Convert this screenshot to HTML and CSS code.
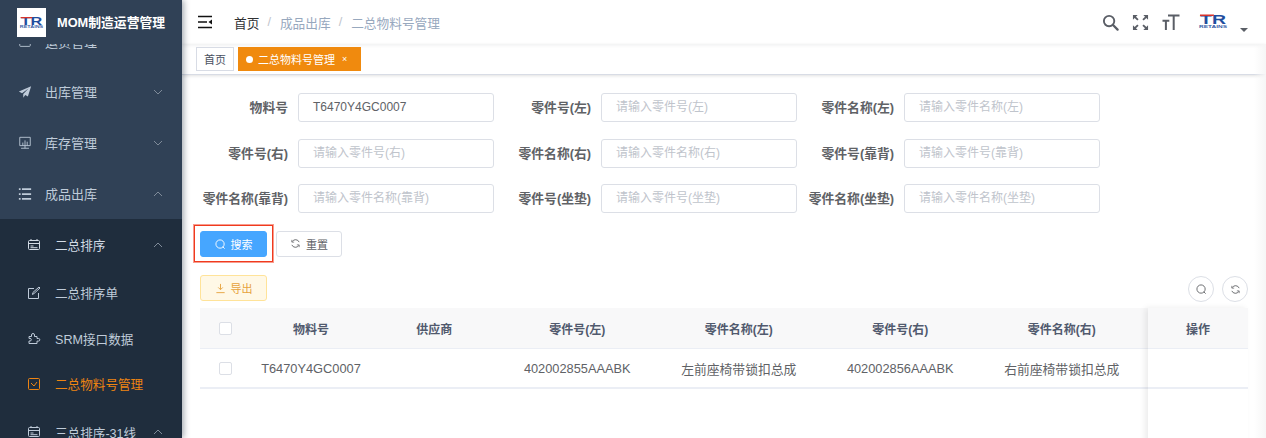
FILE: index.html
```html
<!DOCTYPE html>
<html lang="zh-CN">
<head>
<meta charset="utf-8">
<title>二总物料号管理</title>
<link rel="stylesheet" href="styles.css">
</head>
<body>
<div class="app">
  <aside class="sidebar">
    <div class="brand">
      <div class="brand-logo">
        <svg class="tr tr-small" viewBox="0 -3 30 18">
          <text class="tr-mark" x="2" y="10" textLength="26" lengthAdjust="spacingAndGlyphs">TR</text>
          <path d="M2 .600h14l-.4 1.500H2z" fill="#d8322a"/>
          <text class="tr-name" x="1" y="14.200" textLength="28" lengthAdjust="spacingAndGlyphs">RETAINS</text>
        </svg>
      </div>
      <span class="brand-title">MOM制造运营管理</span>
    </div>
    <nav class="menu">
      <div class="clip-item"><span class="clip-inner">
        <svg class="mi" viewBox="0 0 16 16"><rect x="2" y="3" width="12" height="10" rx="1" fill="none" stroke="currentColor"/></svg>
        <span>运货管理</span></span></div>
      <div class="item">
        <svg class="mi" viewBox="0 0 16 16"><path d="M15 1.500 1 7.500l3.600 1.900L12 4 6 10.200V14.500l2.300-3 3 1.600z" fill="currentColor"/></svg>
        <span class="label">出库管理</span>
        <svg class="chev" viewBox="0 0 10 6"><path d="M1 1l4 4 4-4"/></svg>
      </div>
      <div class="item">
        <svg class="mi" viewBox="0 0 16 16"><path d="M2 1.500h12v9.500H2zM3.500 14h9M8 11v3M8 5v6M5.500 7.500V11M10.500 6.500V11" fill="none" stroke="currentColor"/></svg>
        <span class="label">库存管理</span>
        <svg class="chev" viewBox="0 0 10 6"><path d="M1 1l4 4 4-4"/></svg>
      </div>
      <div class="item">
        <svg class="mi" viewBox="0 0 16 16"><path d="M4.500 1.500H15v2H4.500zM4.500 7H15v2H4.500zM4.500 12.500H15v2H4.500zM1 1.500h2v2H1zM1 7h2v2H1zM1 12.500h2v2H1z" fill="currentColor"/></svg>
        <span class="label">成品出库</span>
        <svg class="chev" viewBox="0 0 10 6"><path d="M1 5l4-4 4 4"/></svg>
      </div>
      <div class="submenu">
        <div class="sub sub-tall sub-head">
          <svg class="si" viewBox="0 0 14 14"><rect x="1.500" y="2.500" width="11" height="9" rx="1" fill="none" stroke="currentColor"/><path d="M1.500 5.500h11M3.500 8h3M3.500 9.700h7" stroke="currentColor" fill="none"/><path d="M4 1v2M10 1v2" stroke="currentColor"/></svg>
          <span class="label">二总排序</span>
          <svg class="chev" viewBox="0 0 10 6"><path d="M1 5l4-4 4 4"/></svg>
        </div>
        <div class="sub">
          <svg class="si" viewBox="0 0 14 14"><path d="M7 2.500H1.500v10h10V7M5.500 8.500l.4-2L12 1l1 1-6 5.500z" fill="none" stroke="currentColor"/></svg>
          <span class="label">二总排序单</span>
        </div>
        <div class="sub">
          <svg class="si" viewBox="0 0 14 14"><path d="M2 5.500h2.500V4a1.500 1.500 0 0 1 3 0v1.500H10v2h1.500a1.300 1.300 0 0 1 0 2.600H10v2.400H2v-2.500h1a1.300 1.300 0 0 0 0-2.600H2z" fill="none" stroke="currentColor"/></svg>
          <span class="label">SRM接口数据</span>
        </div>
        <div class="sub active">
          <svg class="si" viewBox="0 0 14 14"><rect x="1.500" y="1.500" width="11" height="11" rx="1" fill="none" stroke="currentColor"/><path d="M4 6l3 3 3-4" fill="none" stroke="currentColor"/></svg>
          <span class="label">二总物料号管理</span>
        </div>
        <div class="sub sub-tall">
          <svg class="si" viewBox="0 0 14 14"><rect x="1.500" y="2.500" width="11" height="9" rx="1" fill="none" stroke="currentColor"/><path d="M1.500 5.500h11M3.500 8h3M3.500 9.700h7" stroke="currentColor" fill="none"/><path d="M4 1v2M10 1v2" stroke="currentColor"/></svg>
          <span class="label">三总排序-31线</span>
          <svg class="chev" viewBox="0 0 10 6"><path d="M1 5l4-4 4 4"/></svg>
        </div>
      </div>
    </nav>
  </aside>

  <main class="main">
    <header class="topbar">
      <svg class="hamburger" viewBox="0 0 16 14"><path d="M1 1.500h14M1 7h9M1 12.500h14" stroke="#111" stroke-width="1.600" fill="none"/><path d="M15 4.500v5l-3.500-2.500z" fill="#111"/></svg>
      <div class="crumbs">
        <span class="crumb-home">首页</span><span class="sep">/</span><span>成品出库</span><span class="sep">/</span><span>二总物料号管理</span>
      </div>
      <div class="tools">
        <svg class="tool tool-search" viewBox="0 0 18 18"><circle cx="7.500" cy="7.500" r="5.500" fill="none" stroke="#5a5e66" stroke-width="2"/><path d="M11.700 11.700 16.500 16.500" stroke="#5a5e66" stroke-width="2.400" stroke-linecap="round"/></svg>
        <svg class="tool tool-full" viewBox="0 0 18 18"><path d="M1 1h5l-1.800 1.800 2.800 2.800-1.400 1.400-2.800-2.800L1 6zM17 1v5l-1.800-1.800-2.800 2.800-1.400-1.400 2.800-2.800L12 1zM1 17v-5l1.800 1.800 2.800-2.800 1.400 1.400-2.800 2.800L6 17zM17 17h-5l1.800-1.800-2.800-2.800 1.400-1.400 2.800 2.800L17 12z" fill="#5a5e66"/></svg>
        <svg class="tool tool-size" viewBox="0 0 18 18"><path d="M6 2.500h11.500M11.700 2.500V17M.5 7.800h6.800M3.900 7.800V17" fill="none" stroke="#5a5e66" stroke-width="2"/></svg>
        <svg class="tr tr-top" viewBox="0 -3 30 18">
          <text class="tr-mark" x="2" y="10" textLength="26" lengthAdjust="spacingAndGlyphs">TR</text>
          <path d="M2 .600h14l-.4 1.500H2z" fill="#d8322a"/>
          <text class="tr-name" x="1" y="14.200" textLength="28" lengthAdjust="spacingAndGlyphs">RETAINS</text>
        </svg>
        <span class="caret"></span>
      </div>
    </header>
    <div class="tabs">
      <span class="tab">首页</span>
      <span class="tab tab-on"><i class="dot"></i>二总物料号管理<span class="close">×</span></span>
    </div>
    <section class="content">
      <form class="form">
        <label class="field"><span class="flabel">物料号</span><span class="input filled">T6470Y4GC0007</span></label>
        <label class="field"><span class="flabel">零件号(左)</span><span class="input">请输入零件号(左)</span></label>
        <label class="field"><span class="flabel">零件名称(左)</span><span class="input">请输入零件名称(左)</span></label>
        <label class="field"><span class="flabel">零件号(右)</span><span class="input">请输入零件号(右)</span></label>
        <label class="field"><span class="flabel">零件名称(右)</span><span class="input">请输入零件名称(右)</span></label>
        <label class="field"><span class="flabel">零件号(靠背)</span><span class="input">请输入零件号(靠背)</span></label>
        <label class="field"><span class="flabel">零件名称(靠背)</span><span class="input">请输入零件名称(靠背)</span></label>
        <label class="field"><span class="flabel">零件号(坐垫)</span><span class="input">请输入零件号(坐垫)</span></label>
        <label class="field"><span class="flabel">零件名称(坐垫)</span><span class="input">请输入零件名称(坐垫)</span></label>
      </form>
      <div class="actions">
        <div class="highlight">
          <button class="btn btn-primary" type="button"><svg class="bi" viewBox="0 0 12 12"><circle cx="5.500" cy="5.500" r="4.500" fill="none" stroke="currentColor"/><path d="M8.500 8.500 10.500 10.500" stroke="currentColor"/></svg>搜索</button>
        </div>
        <button class="btn" type="button"><svg class="bi" viewBox="0 0 12 12"><path d="M10 4.500A4.300 4.300 0 0 0 2.300 4M2 7.500A4.300 4.300 0 0 0 9.700 8" fill="none" stroke="currentColor"/><path d="M2 2v2.500h2.500M10 10V7.500H7.500" fill="none" stroke="currentColor" stroke-width=".8"/></svg>重置</button>
      </div>
      <div class="toolbar">
        <button class="btn btn-warn" type="button"><svg class="bi" viewBox="0 0 12 12"><path d="M6 1v6M3.500 4.800 6 7.300l2.500-2.500M1.500 10.500h9" fill="none" stroke="currentColor"/></svg>导出</button>
        <div class="circles">
          <span class="circle"><svg viewBox="0 0 12 12"><circle cx="5.500" cy="5.500" r="4.500" fill="none" stroke="currentColor"/><path d="M8.500 8.500 10.500 10.500" stroke="currentColor"/></svg></span>
          <span class="circle"><svg viewBox="0 0 12 12"><path d="M10 4.500A4.300 4.300 0 0 0 2.300 4M2 7.500A4.300 4.300 0 0 0 9.700 8" fill="none" stroke="currentColor"/><path d="M2 2v2.500h2.500M10 10V7.500H7.500" fill="none" stroke="currentColor" stroke-width=".8"/></svg></span>
        </div>
      </div>
      <div class="table">
        <div class="thead row">
          <span class="c c0"><i class="check"></i></span>
          <span class="c c1">物料号</span><span class="c c2">供应商</span><span class="c c3">零件号(左)</span><span class="c c3">零件名称(左)</span><span class="c c3">零件号(右)</span><span class="c c3">零件名称(右)</span>
        </div>
        <div class="tbody row">
          <span class="c c0"><i class="check"></i></span>
          <span class="c c1">T6470Y4GC0007</span><span class="c c2"></span><span class="c c3">402002855AAABK</span><span class="c c3">左前座椅带锁扣总成</span><span class="c c3">402002856AAABK</span><span class="c c3">右前座椅带锁扣总成</span>
        </div>
        <div class="fixed">
          <div class="fixed-head">操作</div>
          <div class="fixed-cell"></div>
        </div>
      </div>
    </section>
  </main>
</div>
</body>
</html>
```

FILE: styles.css
```css
* { box-sizing: border-box; }
html, body { margin: 0; height: 100%; overflow: hidden; }
body { font-family: "Liberation Sans", "Noto Sans CJK SC", sans-serif; font-size: 13px; color: #606266; background: #fff; }
.app { display: flex; width: 1266px; height: 438px; overflow: hidden; }

.sidebar { width: 182px; flex: none; height: 438px; background: #304156; overflow: hidden; box-shadow: 2px 0 6px rgba(0,21,41,.35); position: relative; z-index: 2; color: #bfcbd9; }
.brand { height: 44px; display: flex; align-items: center; padding-left: 17px; gap: 11px; background: #304156; }
.brand-logo { width: 29px; height: 29px; background: #fff; display: flex; align-items: center; justify-content: center; }
.brand-title { color: #fff; font-weight: 700; font-size: 12.800px; white-space: nowrap; margin-top: -2px; }

.tr { display: block; flex: none; }
.tr-mark { fill: #1f4e9e; font: 700 13.500px "Liberation Sans", sans-serif; }
.tr-name { fill: #3a5fa8; font: 700 4px "Liberation Sans", sans-serif; }
.tr-small { width: 25px; height: 15px; margin-top: -2px; }
.tr-top { width: 30px; height: 18px; margin: -4px 0 0 18px; }

.menu { display: flex; flex-direction: column; }
.clip-item { height: 22px; overflow: hidden; padding-left: 18px; flex: none; }
.clip-inner { display: flex; align-items: center; gap: 13px; margin-top: -12px; height: 19px; }
.item { height: 51px; display: flex; align-items: center; padding: 0 19px 0 18px; flex: none; }
.item .label { margin-left: 13px; flex: 1; }
.mi { width: 14px; height: 14px; flex: none; color: #bfcbd9; }
.chev { width: 10px; height: 6px; flex: none; fill: none; stroke: #7f8b99; stroke-width: 1; }
.submenu { background: #1f2d3d; }
.sub { height: 45.500px; display: flex; align-items: center; padding: 0 19px 0 27px; font-size: 12.600px; }
.sub .label { margin-left: 14px; flex: 1; white-space: nowrap; }
.sub-tall { height: 51px; }
.sub-head { color: #d3dce6; }
.si { width: 14px; height: 14px; flex: none; }
.sub.active { color: #ee8412; }

.main { flex: 1; min-width: 0; display: flex; flex-direction: column; position: relative; }
.main::after { content: ""; position: absolute; top: 44px; right: 0; bottom: 0; width: 12px; background: linear-gradient(90deg, rgba(245,245,245,0), #f6f6f6); pointer-events: none; }
.topbar { height: 44px; display: flex; align-items: center; padding-left: 15px; box-shadow: 0 1px 4px rgba(0,21,41,.08); flex: none; }
.hamburger { width: 16px; height: 14px; flex: none; }
.crumbs { margin-left: 21px; display: flex; align-items: center; color: #97a8be; font-size: 12.700px; }
.crumb-home { color: #303133; }
.sep { margin: 0 9px 0 8px; color: #c0c4cc; }
.tools { margin-left: auto; display: flex; align-items: center; padding-right: 18px; }
.tool { flex: none; }
.tool-search { width: 17px; height: 17px; }
.tool-full { width: 17px; height: 17px; margin-left: 13px; }
.tool-size { width: 18px; height: 18px; margin-left: 13px; }
.caret { width: 0; height: 0; border: 4px solid transparent; border-top: 4px solid #5a5e66; margin: 16px 0 0 12px; border-bottom: 0; }

.tabs { height: 31px; display: flex; align-items: center; gap: 4px; padding: 0 0 0 14px; border-bottom: 1px solid #d8dce5; box-shadow: 0 1px 3px rgba(0,0,0,.12); flex: none; }
.tab { height: 24px; padding: 0 7px; border: 1px solid #d8dce5; font-size: 11px; display: flex; align-items: center; color: #495060; }
.tab-on { background: #f08a0e; border-color: #f08a0e; color: #fff; padding: 0 13px 0 7px; }
.dot { width: 7px; height: 7px; border-radius: 50%; background: #fff; margin-right: 5px; }
.close { margin-left: 7px; font-size: 9px; }

.content { flex: 1; padding: 18px 18px 0 18px; position: relative; min-height: 0; }
.form { display: grid; grid-template-columns: repeat(3, 303px); row-gap: 16.500px; margin-left: -10px; }
.field { display: flex; align-items: center; height: 29px; }
.flabel { width: 98px; text-align: right; font-weight: 700; font-size: 12.800px; white-space: nowrap; flex: none; margin-top: -2px; }
.input { flex: none; width: 196px; height: 29px; margin-left: 10px; border: 1px solid #dcdfe6; border-radius: 3px; padding: 0 14px; font-size: 12px; line-height: 27px; color: #c0c4cc; white-space: nowrap; }
.input.filled { color: #606266; }

.actions { display: flex; align-items: center; margin-top: 12px; gap: 3px; margin-left: -6px; }
.highlight { border: 1px solid #f03a1e; box-shadow: 0 0 0 1px rgba(240,58,30,.5); padding: 5px; height: 37px; }
.btn { height: 26px; padding: 0 14px; border: 1px solid #dcdfe6; border-radius: 3px; background: #fff; color: #606266; font: 11px "Liberation Sans", "Noto Sans CJK SC", sans-serif; display: inline-flex; align-items: center; gap: 5px; }
.bi { width: 11px; height: 11px; flex: none; }
.btn-primary { background: #46a6ff; border-color: #46a6ff; color: #fff; width: 67px; justify-content: center; padding: 0; display: flex; }
.actions > .btn { width: 66px; justify-content: center; padding: 0; }
.btn-warn { background: #fff8e6; border-color: #ffe399; color: #e6a23c; width: 67px; justify-content: center; padding: 0; }
.toolbar { display: flex; align-items: center; justify-content: space-between; margin-top: 13px; height: 26px; }
.circles { display: flex; gap: 8px; margin-top: 2px; }
.circle { width: 26px; height: 26px; border: 1px solid #dcdfe6; border-radius: 50%; display: flex; align-items: center; justify-content: center; color: #606266; }
.circle svg { width: 11px; height: 11px; }

.table { position: relative; margin-top: 7px; width: 1048px; height: 140px; }
.row { display: flex; align-items: center; border-bottom: 1px solid #ebeef5; }
.thead { height: 41px; background: #f8f8f9; font-weight: 700; font-size: 12px; color: #515a6e; }
.tbody { height: 40px; border-bottom-width: 2px; font-size: 12.800px; }
.c { text-align: center; flex: none; white-space: nowrap; }
.c0 { width: 50px; display: flex; justify-content: center; }
.c1 { width: 122px; }
.c2 { width: 124.500px; }
.c3 { width: 161.500px; }
.check { width: 13px; height: 13px; border: 1px solid #dcdfe6; border-radius: 2px; background: #fff; display: block; }
.fixed { position: absolute; top: 0; right: 0; width: 100px; height: 140px; background: #fff; box-shadow: -3px 0 6px rgba(0,0,0,.08); }
.fixed-head { height: 41px; background: #f8f8f9; border-bottom: 1px solid #ebeef5; font-weight: 700; font-size: 12px; color: #515a6e; display: flex; align-items: center; justify-content: center; }
.fixed-cell { height: 40px; border-bottom: 2px solid #ebeef5; }
```
